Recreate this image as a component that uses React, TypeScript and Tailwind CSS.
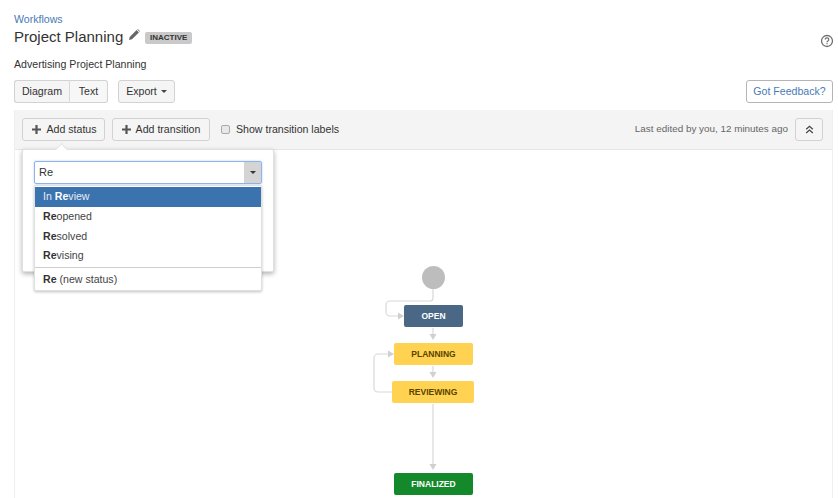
import React from "react";

const btn = "h-[23px] flex items-center justify-center rounded-[3px] border border-[#d2d2d2] bg-[#f5f5f5] text-[#333] text-[10.6px]";

function Plus() {
  return (
    <svg width="9" height="9" viewBox="0 0 9 9" className="mr-[5px]">
      <path d="M3.4 0h2.2v3.4H9v2.2H5.6V9H3.4V5.6H0V3.4h3.4z" fill="#555" />
    </svg>
  );
}

function Node({ label, x, y, w, h, cls }: { label: string; x: number; y: number; w: number; h: number; cls: string }) {
  return (
    <div
      className={`absolute flex items-center justify-center rounded-[2px] text-[8.5px] font-bold ${cls}`}
      style={{ left: x, top: y, width: w, height: h }}
    >
      {label}
    </div>
  );
}

function Row({ bold, rest, active }: { bold: string; rest: string; active?: boolean }) {
  return (
    <div className={`h-[19.8px] pl-2 flex items-center text-[10.6px] ${active ? "bg-[#3b73af] text-[#e4ecf5]" : "text-[#444]"}`}>
      {active ? "In\u00a0" : null}
      <b className={active ? "text-white" : "text-[#333]"}>{bold}</b>
      {rest}
    </div>
  );
}

export default function App() {
  return (
    <div className="w-[838px] h-[498px] overflow-hidden bg-white font-['Liberation_Sans',Arial,sans-serif] text-[#333] pl-[14px] pr-[5px] pt-[13px] flex flex-col">
      <div className="text-[10.6px] leading-[13px] text-[#4a7ab5]">Workflows</div>
      <div className="flex items-center h-[24px] mt-[-1px] relative">
        <span className="text-[15px] text-[#333]">Project Planning</span>
        <svg width="11" height="11" viewBox="0 0 11 11" className="ml-[6px] mb-[5px]">
          <path d="M0 11l.7-3L7.6 1.1l2.3 2.3L3 10.3zM8.3.4l.5-.4 2.2 2.2-.5.5z" fill="#666" />
        </svg>
        <span className="ml-[5px] mt-[2px] h-[12px] w-[47px] flex items-center justify-center rounded-[2px] bg-[#c9c9c9] text-[8px] font-bold text-[#333]">INACTIVE</span>
        <svg width="14" height="14" viewBox="0 0 14 14" className="absolute left-[806px] top-[9px]">
          <circle cx="7" cy="7" r="5.5" fill="none" stroke="#707070" strokeWidth="1.3" />
          <path d="M5.2 5.6c0-2.3 3.6-2.3 3.6 0 0 1.3-1.8 1.3-1.8 2.6" fill="none" stroke="#707070" strokeWidth="1.2" />
          <rect x="6.4" y="9.1" width="1.2" height="1.2" fill="#707070" />
        </svg>
      </div>
      <div className="text-[10.6px] leading-[13px] mt-[9px] text-[#333]">Advertising Project Planning</div>
      <div className="flex items-center mt-[9px] h-[23px]">
        <div className={`${btn} w-[56px] rounded-r-none border-r-[#d8d8d8] bg-[#ebebeb]`}>Diagram</div>
        <div className={`${btn} w-[38px] rounded-l-none border-l-0 bg-[#f7f7f7]`}>Text</div>
        <div className={`${btn} w-[57px] ml-[10px]`}>
          Export
          <span className="ml-[4px] w-0 h-0 border-x-[3px] border-x-transparent border-t-[3px] border-t-[#444]" />
        </div>
        <div className="ml-auto h-[23px] w-[87px] flex items-center justify-center rounded-[3px] border border-[#b5b5b5] bg-white text-[10.6px] text-[#4a7ab5]">Got Feedback?</div>
      </div>
      <div className="mt-[7px] flex-1 border-x border-[#eeeeee] flex flex-col min-h-0">
        <div className="h-[40px] shrink-0 bg-[#f4f4f4] border-b border-[#e6e6e6] flex items-center pl-[7px] pr-[9px]">
          <div className={`${btn} w-[83px] bg-[#eeeeee] pl-[2px]`}><Plus />Add status</div>
          <div className={`${btn} w-[98px] ml-[7px]`}><Plus />Add transition</div>
          <span className="ml-[11px] w-[9px] h-[9px] rounded-[2px] border border-[#aaa] bg-[#e8e8e8]" />
          <span className="ml-[6px] text-[10.6px] text-[#333]">Show transition labels</span>
          <span className="ml-auto text-[9.9px] text-[#666]">Last edited by you, 12 minutes ago</span>
          <div className={`${btn} w-[28px] ml-[7px]`}>
            <svg width="9" height="9" viewBox="0 0 9 9">
              <path d="M1.2 4.2L4.5 1.2l3.3 3M1.2 8L4.5 5l3.3 3" fill="none" stroke="#444" strokeWidth="1.2" />
            </svg>
          </div>
        </div>
        <div className="relative flex-1">
          <svg className="absolute left-0 top-0" width="818" height="348" viewBox="0 0 818 348">
            <g fill="none" stroke="#d8d8d8" strokeWidth="1.2">
              <path d="M418 135v13a3 3 0 0 1-3 3h-40a4 4 0 0 0-4 4v7a4 4 0 0 0 4 4h10" />
              <path d="M418 178v6" />
              <path d="M418 216v6" />
              <path d="M377 242h-14a4 4 0 0 1-4-4v-30a4 4 0 0 1 4-4h11" />
              <path d="M418 254v60" />
            </g>
            <g fill="#d0d0d0">
              <path d="M389 166l-6-3.5v7z" />
              <path d="M418 190l-3.5-6h7z" />
              <path d="M418 228l-3.5-6h7z" />
              <path d="M379 204l-6-3.5v7z" />
              <path d="M418 320l-3.5-6h7z" />
            </g>
          </svg>
          <div className="absolute left-[407px] top-[116px] w-[23px] h-[23px] rounded-full bg-[#bdbdbd]" />
          <Node label="OPEN" x={389} y={155} w={59} h={22} cls="bg-[#4a6785] text-white" />
          <Node label="PLANNING" x={379} y={193} w={79} h={22} cls="bg-[#ffd351] text-[#594300]" />
          <Node label="REVIEWING" x={377} y={231} w={82} h={22} cls="bg-[#ffd351] text-[#594300]" />
          <Node label="FINALIZED" x={379} y={323} w={79} h={22} cls="bg-[#14892c] text-white" />

          <div className="absolute left-[7px] top-[-1px] w-[252px] h-[123px] bg-white rounded-[2px] border border-[#e0e0e0] shadow-[0_2px_5px_rgba(0,0,0,0.3)]">
            <div className="absolute left-[34px] top-[-5px] w-[9px] h-[9px] rotate-45 bg-white border-l border-t border-[#e0e0e0]" />
            <div className="absolute left-[11px] top-[11px] w-[228px] h-[23px] rounded-[2px] border border-[#8fb3ea] shadow-[0_0_2px_#a9c4ee] flex items-center pl-[4px] text-[11px] text-[#333]">
              Re
              <div className="ml-auto h-full w-[17px] bg-[#d4d4d4] flex items-center justify-center">
                <span className="w-0 h-0 border-x-[3px] border-x-transparent border-t-[3px] border-t-[#333]" />
              </div>
            </div>
          </div>
          <div className="absolute left-[19px] top-[35px] w-[228px] h-[106px] bg-white rounded-[2px] border border-[#e0e0e0] shadow-[0_1px_3px_rgba(0,0,0,0.25)] pt-[1px]">
            <Row bold="Re" rest="view" active />
            <Row bold="Re" rest="opened" />
            <Row bold="Re" rest="solved" />
            <Row bold="Re" rest="vising" />
            <div className="mt-[1px] border-t border-[#cfcfcf] h-[24px] pl-2 flex items-center text-[10.6px] text-[#444]">
              <b className="text-[#333]">Re</b>&nbsp;(new status)
            </div>
          </div>
        </div>
      </div>
    </div>
  );
}
